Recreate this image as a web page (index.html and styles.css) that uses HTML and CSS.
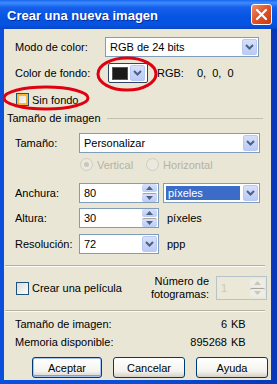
FILE: index.html
```html
<!DOCTYPE html>
<html lang="es">

<head>
    <meta charset="UTF-8">
    <title>Crear una nueva imagen</title>
    <link rel="stylesheet" href="styles.css">
</head>

<body>
    <div class="window">
        <div class="titlebar">
            <span class="title">Crear una nueva imagen</span>
            <span class="close">
                <svg width="13" height="13" viewBox="0 0 13 13"><path d="M2 2 L11 11 M11 2 L2 11" stroke="#fff" stroke-width="2.2" stroke-linecap="round"/></svg>
            </span>
        </div>

        <div class="client">
            <div class="row r-mode">
                <span class="lbl" style="width:90px">Modo de color:</span>
                <div class="combo" style="width:154px">
                    <span class="val">RGB de 24 bits</span>
                    <span class="drop"><svg width="9" height="6" viewBox="0 0 9 6"><path d="M1 1 L4.5 4.5 L8 1" fill="none" stroke="#4d6185" stroke-width="2"/></svg></span>
                </div>
            </div>

            <div class="row r-bg">
                <span class="lbl" style="width:93px">Color de fondo:</span>
                <div class="swatch">
                    <span class="chip"></span>
                    <span class="drop"><svg width="9" height="6" viewBox="0 0 9 6"><path d="M1 1 L4.5 4.5 L8 1" fill="none" stroke="#4d6185" stroke-width="2"/></svg></span>
                </div>
                <span class="rgb">RGB:</span>
                <span class="rgbval">0,&nbsp; 0,&nbsp; 0</span>
            </div>

            <div class="row r-nobg">
                <span class="check hover"></span>
                <span class="ctext">Sin fondo</span>
            </div>

            <div class="group-head">
                <span>Tamaño de imagen</span>
                <span class="gline"></span>
            </div>

            <div class="row r-size">
                <span class="lbl" style="width:64px">Tamaño:</span>
                <div class="combo" style="width:181px">
                    <span class="val">Personalizar</span>
                    <span class="drop"><svg width="9" height="6" viewBox="0 0 9 6"><path d="M1 1 L4.5 4.5 L8 1" fill="none" stroke="#4d6185" stroke-width="2"/></svg></span>
                </div>
            </div>

            <div class="row r-orient">
                <span class="radio on"></span>
                <span class="dis">Vertical</span>
                <span class="radio r2"></span>
                <span class="dis">Horizontal</span>
            </div>

            <div class="row r-w">
                <span class="lbl" style="width:64px">Anchura:</span>
                <div class="spin">
                    <span class="val">80</span>
                    <span class="arrows">
                        <span class="up"><svg width="7" height="4" viewBox="0 0 7 4"><path d="M0 4 L3.5 0 L7 4 Z" fill="#4d6185"/></svg></span>
                        <span class="dn"><svg width="7" height="4" viewBox="0 0 7 4"><path d="M0 0 L3.5 4 L7 0 Z" fill="#4d6185"/></svg></span>
                    </span>
                </div>
                <div class="combo unit">
                    <span class="val sel">píxeles</span>
                    <span class="drop"><svg width="9" height="6" viewBox="0 0 9 6"><path d="M1 1 L4.5 4.5 L8 1" fill="none" stroke="#4d6185" stroke-width="2"/></svg></span>
                </div>
            </div>

            <div class="row r-h">
                <span class="lbl" style="width:64px">Altura:</span>
                <div class="spin">
                    <span class="val">30</span>
                    <span class="arrows">
                        <span class="up"><svg width="7" height="4" viewBox="0 0 7 4"><path d="M0 4 L3.5 0 L7 4 Z" fill="#4d6185"/></svg></span>
                        <span class="dn"><svg width="7" height="4" viewBox="0 0 7 4"><path d="M0 0 L3.5 4 L7 0 Z" fill="#4d6185"/></svg></span>
                    </span>
                </div>
                <span class="unit-text">píxeles</span>
            </div>

            <div class="row r-res">
                <span class="lbl" style="width:64px">Resolución:</span>
                <div class="combo" style="width:80px">
                    <span class="val">72</span>
                    <span class="drop"><svg width="9" height="6" viewBox="0 0 9 6"><path d="M1 1 L4.5 4.5 L8 1" fill="none" stroke="#4d6185" stroke-width="2"/></svg></span>
                </div>
                <span class="unit-text">ppp</span>
            </div>

            <div class="sep s1"></div>

            <div class="row r-movie">
                <span class="check"></span>
                <span class="ctext">Crear una película</span>
                <span class="frames">Número de<br>fotogramas:</span>
                <div class="spin off">
                    <span class="val">1</span>
                    <span class="arrows">
                        <span class="up"><svg width="7" height="4" viewBox="0 0 7 4"><path d="M0 4 L3.5 0 L7 4 Z" fill="#c9c7ba"/></svg></span>
                        <span class="dn"><svg width="7" height="4" viewBox="0 0 7 4"><path d="M0 0 L3.5 4 L7 0 Z" fill="#c9c7ba"/></svg></span>
                    </span>
                </div>
            </div>

            <div class="sep s2"></div>

            <div class="info i1">
                <span class="ilbl">Tamaño de imagen:</span>
                <span class="num">6</span>
                <span class="kb">KB</span>
            </div>
            <div class="info i2">
                <span class="ilbl">Memoria disponible:</span>
                <span class="num">895268</span>
                <span class="kb">KB</span>
            </div>

            <div class="buttons">
                <span class="btn default">Aceptar</span>
                <span class="btn">Cancelar</span>
                <span class="btn">Ayuda</span>
            </div>
        </div>

        <svg class="marks" width="277" height="384" viewBox="0 0 277 384">
            <ellipse cx="127" cy="74" rx="29" ry="16" fill="none" stroke="#e00010" stroke-width="3"/>
            <ellipse cx="46" cy="98" rx="42" ry="11" fill="none" stroke="#e00010" stroke-width="3"/>
        </svg>
    </div>
</body>

</html>
```

FILE: styles.css
```css
body {
    margin: 0;
    font-family: "Liberation Sans", Arial, sans-serif;
    font-size: 11px;
    color: #000;
}

.window {
    position: relative;
    width: 277px;
    height: 384px;
    display: flex;
    flex-direction: column;
    background: linear-gradient(90deg, #0a50dc, #0a4ed6 50%, #0838b8);
}

.titlebar {
    height: 29px;
    display: flex;
    align-items: center;
    padding-left: 7px;
    background: linear-gradient(#1a66ee 0%, #3c8cff 10%, #1660ea 25%, #0554e3 60%, #0553e0 85%, #0a46c8 100%);
}

.title {
    color: #fff;
    font-weight: bold;
    font-size: 13px;
    text-shadow: 1px 1px #0b2b9c;
    padding-top: 1px;
}

.close {
    margin-left: auto;
    margin-right: 5px;
    width: 19px;
    height: 19px;
    border: 1px solid #fff;
    border-radius: 3px;
    background: linear-gradient(135deg, #f0906c, #e0562b 45%, #c63a10);
    display: flex;
    align-items: center;
    justify-content: center;
}

.client {
    flex: 1;
    margin: 0 6px 4px 4px;
    background: #e9e6d6;
    padding-top: 8px;
}

.row {
    display: flex;
    align-items: center;
    padding-left: 11px;
}

.lbl {
    flex: none;
}

.combo,
.spin {
    height: 20px;
    box-sizing: border-box;
    border: 1px solid #7f9db9;
    background: #fff;
    display: flex;
    align-items: center;
    padding: 0 1px 0 4px;
}

.val {
    flex: 1;
}

.drop {
    width: 15px;
    height: 16px;
    box-sizing: border-box;
    border: 1px solid #b7c8f3;
    border-radius: 2px;
    background: linear-gradient(#d6e0fb, #bccbf6);
    display: flex;
    align-items: center;
    justify-content: center;
}

.r-mode {
    height: 20px;
}

.r-bg {
    height: 20px;
    margin-top: 6px;
}

.swatch {
    width: 40px;
    height: 20px;
    box-sizing: border-box;
    border: 1px solid #2c4466;
    border-radius: 2px;
    background: #fff;
    display: flex;
    align-items: center;
    padding: 0 2px 0 3px;
    gap: 2px;
}

.chip {
    width: 17px;
    height: 13px;
    background: #1a1a1a;
    border: 1px solid #555;
    box-sizing: border-box;
}

.rgb {
    margin-left: 9px;
}

.rgbval {
    margin-left: 13px;
}

.r-nobg {
    height: 13px;
    margin-top: 10px;
    padding-left: 12px;
}

.check {
    width: 13px;
    height: 13px;
    box-sizing: border-box;
    border: 1px solid #1c5180;
    background: linear-gradient(135deg, #dcdbd5, #fff);
    flex: none;
}

.check.hover {
    border-color: #1c5180;
    box-shadow: inset 0 0 0 2px #f8b636;
}

.ctext {
    margin-left: 3px;
}

.group-head {
    height: 14px;
    margin-top: 5px;
    padding-left: 3px;
    display: flex;
    align-items: center;
}

.gline {
    flex: 1;
    height: 1px;
    margin: 0 8px 0 6px;
    background: #c2c0b4;
}

.r-size {
    height: 20px;
    margin-top: 8px;
}

.r-orient {
    height: 13px;
    margin-top: 5px;
    padding-left: 76px;
    color: #b4b2a6;
}

.radio {
    width: 11px;
    height: 11px;
    border: 1px solid #cfcdc2;
    border-radius: 50%;
    background: #ebe9df;
    flex: none;
    margin-right: 4px;
    position: relative;
}

.radio.on::after {
    content: "";
    position: absolute;
    left: 3px;
    top: 3px;
    width: 5px;
    height: 5px;
    border-radius: 50%;
    background: #c9c7bb;
}

.radio.r2 {
    margin-left: 13px;
}

.r-w {
    height: 20px;
    margin-top: 12px;
}

.r-h {
    height: 20px;
    margin-top: 5px;
}

.r-res {
    height: 20px;
    margin-top: 6px;
}

.spin {
    width: 80px;
}

.arrows {
    width: 15px;
    height: 18px;
    display: flex;
    flex-direction: column;
    justify-content: space-between;
}

.arrows span {
    height: 8px;
    border-radius: 2px;
    background: linear-gradient(#d6e0fb, #bccbf6);
    display: flex;
    align-items: center;
    justify-content: center;
}

.arrows .dn {
    border-top: 1px solid #a8a69a;
}

.unit {
    width: 97px;
    margin-left: 4px;
    padding-left: 2px;
}

.sel {
    background: #3b6cc8;
    color: #fff;
    height: 14px;
    line-height: 14px;
    padding-left: 2px;
    margin-right: 3px;
}

.unit-text {
    margin-left: 8px;
}

.sep {
    height: 1px;
    margin: 0 6px 0 1px;
    background: #b4b2a6;
    border-bottom: 1px solid #fafaf5;
}

.s1 {
    margin-top: 11px;
}

.r-movie {
    height: 24px;
    margin-top: 9px;
    padding-left: 12px;
    padding-right: 4px;
}

.frames {
    margin-left: auto;
    text-align: right;
    line-height: 13px;
}

.spin.off {
    width: 51px;
    height: 24px;
    margin-left: 7px;
    border-color: #b7c2cb;
    background: #ebe8d8;
    color: #c9c7ba;
}

.spin.off .arrows span {
    background: #eeede5;
}

.s2 {
    margin-top: 10px;
}

.info {
    display: flex;
    height: 16px;
    align-items: center;
    padding-left: 11px;
}

.i1 {
    margin-top: 4px;
}

.i2 {
    margin-top: 2px;
}

.ilbl {
    width: 140px;
}

.num {
    width: 72px;
    text-align: right;
}

.kb {
    margin-left: 4px;
}

.buttons {
    display: flex;
    gap: 11px;
    margin-top: 7px;
    padding-left: 28px;
}

.btn {
    width: 72px;
    height: 21px;
    box-sizing: border-box;
    border: 1px solid #003c74;
    border-radius: 3px;
    background: linear-gradient(#fff, #f4f3ee 70%, #d6d0c5);
    display: flex;
    align-items: center;
    justify-content: center;
}

.btn.default {
    width: 70px;
    box-shadow: inset 0 0 0 1px #a8c4f2, inset 0 -1px 0 1px #7c9ee0;
}

.marks {
    position: absolute;
    left: 0;
    top: 0;
    pointer-events: none;
}
```
